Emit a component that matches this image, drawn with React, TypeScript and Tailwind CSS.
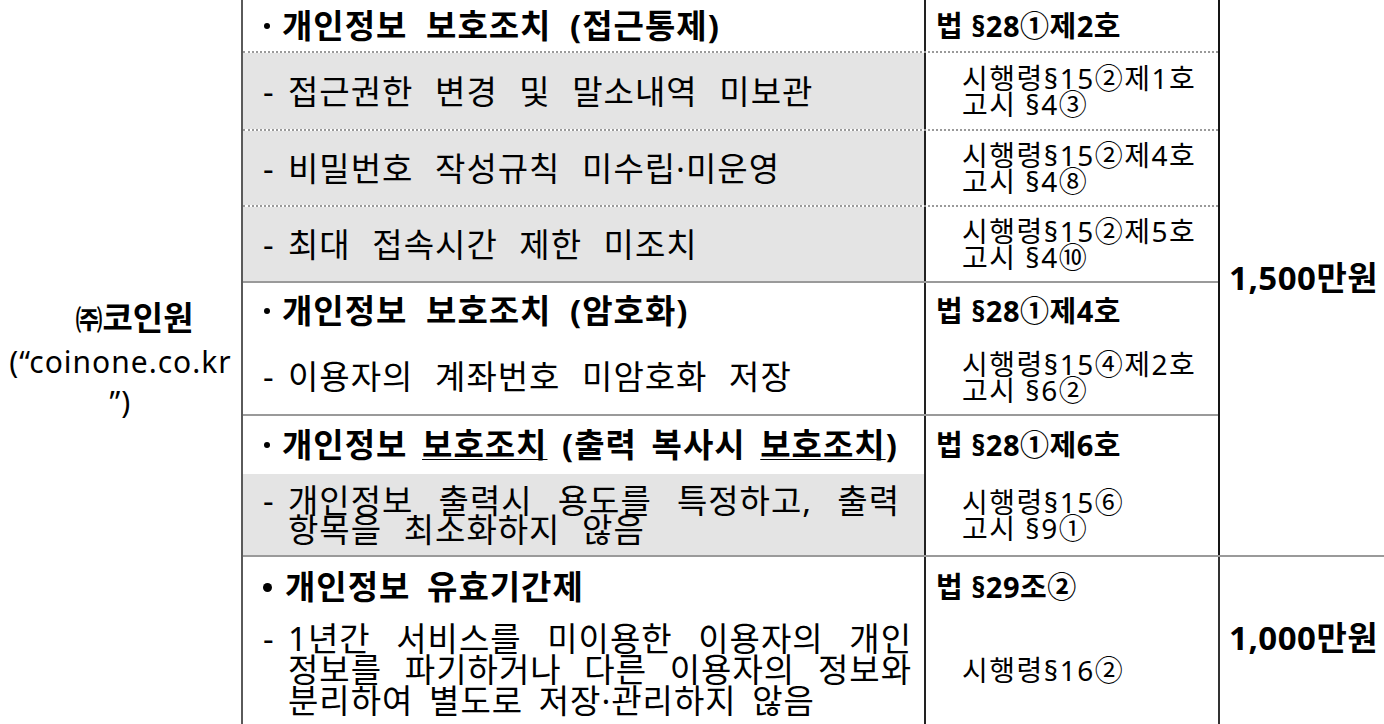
import React from 'react';

interface Row {
  h: string;
  kind: 'head' | 'item';
  text: string[];
  law: string[];
  gray?: boolean;
  line?: 'dot' | 'solid';
}

// Noto Sans first so that §, digits and · stay narrow; hangul falls through to the CJK face
const font = "font-['Noto_Sans','Noto_Sans_CJK_KR',sans-serif]";

// upper group (1,500만원)
const upper: Row[] = [
  { h: 'h-[53px]', kind: 'head', text: ['개인정보 보호조치 (접근통제)'], law: ['법 §28①제2호'], line: 'dot' },
  { h: 'h-[78px]', kind: 'item', text: ['접근권한 변경 및 말소내역 미보관'], law: ['시행령§15②제1호', '고시 §4③'], gray: true, line: 'dot' },
  { h: 'h-[76px]', kind: 'item', text: ['비밀번호 작성규칙 미수립·미운영'], law: ['시행령§15②제4호', '고시 §4⑧'], gray: true, line: 'dot' },
  { h: 'h-[76px]', kind: 'item', text: ['최대 접속시간 제한 미조치'], law: ['시행령§15②제5호', '고시 §4⑩'], gray: true, line: 'solid' },
  { h: 'h-[56px]', kind: 'head', text: ['개인정보 보호조치 (암호화)'], law: ['법 §28①제4호'] },
  { h: 'h-[77px]', kind: 'item', text: ['이용자의 계좌번호 미암호화 저장'], law: ['시행령§15④제2호', '고시 §6②'], line: 'solid' },
  { h: 'h-[58px]', kind: 'head', text: ['출력'], law: ['법 §28①제6호'] },
  { h: 'h-[81px]', kind: 'item', text: ['개인정보 출력시 용도를 특정하고, 출력', '항목을 최소화하지 않음'], law: ['시행령§15⑥', '고시 §9①'], gray: true },
];

const Bullet: React.FC<{ big?: boolean }> = ({ big }) => (
  <span
    className={
      big
        ? 'inline-block w-[9px] h-[9px] rounded-full bg-black mr-[13px] ml-[2px] shrink-0'
        : 'inline-block w-[6px] h-[6px] rounded-full bg-black mr-[12px] ml-[4px] shrink-0'
    }
  />
);

const HeadText: React.FC<{ text: string }> = ({ text }) => {
  // the print row has underlined 보호조치 twice
  if (text === '출력') {
    return (
      <span className="[word-spacing:5px]">
        개인정보 <span className="underline underline-offset-[2px] decoration-1">보호조치</span> (출력 복사시{' '}
        <span className="underline underline-offset-[2px] decoration-1">보호조치</span>)
      </span>
    );
  }
  return <span>{text}</span>;
};

const ItemCell: React.FC<{ row: Row }> = ({ row }) => {
  if (row.kind === 'head') {
    return (
      <div className="flex items-center pl-[17px] text-[33px] font-bold tracking-[1px] [word-spacing:9px] whitespace-nowrap">
        <Bullet />
        <HeadText text={row.text[0]} />
      </div>
    );
  }
  return (
    <div className="flex w-full pl-[20px] pr-[24px] text-[33px] leading-[29px] tracking-[1px] [word-spacing:12px]">
      <span className="w-[25px] shrink-0">-</span>
      <div className="flex-1">
        {row.text.map((t, i) => (
          <div
            key={i}
            className={i < row.text.length - 1 ? 'text-justify [text-align-last:justify]' : ''}
          >
            {t}
          </div>
        ))}
      </div>
    </div>
  );
};

const LawCell: React.FC<{ lines: string[]; bold?: boolean }> = ({ lines, bold }) =>
  bold ? (
    <div className="pl-[10px] text-[29px] font-bold tracking-[0.5px] whitespace-nowrap">{lines[0]}</div>
  ) : (
    <div className="pl-[36px] text-[28px] leading-[26px] tracking-[1.5px] whitespace-nowrap">
      {lines.map((l, i) => (
        <div key={i}>{l}</div>
      ))}
    </div>
  );

const TableRow: React.FC<{ row: Row }> = ({ row }) => {
  const line =
    row.line === 'dot'
      ? 'border-b-2 border-dotted border-[#9a9a9a]'
      : row.line === 'solid'
        ? 'border-b-2 border-[#9a9a9a]'
        : '';
  return (
    <div className={`grid grid-cols-[681px_294px] ${row.h} ${line}`}>
      <div className={`flex items-center ${row.gray ? 'bg-[#e4e4e4]' : ''}`}>
        <ItemCell row={row} />
      </div>
      <div className="flex items-center border-l-2 border-[#222]">
        <LawCell lines={row.law} bold={row.kind === 'head'} />
      </div>
    </div>
  );
};

const App: React.FC = () => {
  return (
    <div className={`flex w-[1384px] h-[724px] bg-white text-black overflow-hidden ${font}`}>
      {/* company */}
      <div className="w-[241px] shrink-0 flex flex-col items-center justify-center pb-[6px]">
        <div className="text-[33px] font-bold leading-[44px] pl-[28px]">
          <span className="text-[27px]">㈜</span>코인원
        </div>
        <div className="text-[30px] leading-[40px] tracking-[1px] text-center">
          (“coinone.co.kr
          <br />
          ”)
        </div>
      </div>

      <div className="flex-1 flex flex-col border-l-2 border-[#5a5a5a]">
        {/* upper group */}
        <div className="flex h-[555px]">
          <div className="w-[975px] flex flex-col">
            {upper.map((row, i) => (
              <TableRow key={i} row={row} />
            ))}
          </div>
          <div className="flex-1 flex items-center border-l-2 border-[#151515] pl-[9px] text-[33px] font-bold tracking-[0.5px]">
            1,500만원
          </div>
        </div>

        {/* lower group */}
        <div className="flex flex-1 border-t-2 border-[#9a9a9a]">
          <div className="w-[975px] grid grid-cols-[681px_294px] grid-rows-[60px_1fr]">
            <div className="flex items-center pl-[18px] text-[33px] font-bold tracking-[1px] [word-spacing:7px]">
              <Bullet big />
              개인정보 유효기간제
            </div>
            <div className="flex items-center border-l-2 border-[#222]">
              <LawCell lines={['법 §29조②']} bold />
            </div>
            <div className="flex items-center pb-[2px]">
              <div className="flex w-full pl-[20px] pr-[12px] text-[33px] leading-[31px] tracking-[1px] [word-spacing:6px]">
                <span className="w-[25px] shrink-0">-</span>
                <div className="flex-1">
                  <div className="text-justify [text-align-last:justify]">1년간 서비스를 미이용한 이용자의 개인</div>
                  <div className="text-justify [text-align-last:justify]">정보를 파기하거나 다른 이용자의 정보와</div>
                  <div>분리하여 별도로 저장·관리하지 않음</div>
                </div>
              </div>
            </div>
            <div className="flex items-center border-l-2 border-[#222] pb-[2px]">
              <LawCell lines={['시행령§16②']} />
            </div>
          </div>
          <div className="flex-1 flex items-center border-l-2 border-[#333] pl-[9px] text-[33px] font-bold tracking-[0.5px] pb-[6px]">
            1,000만원
          </div>
        </div>
      </div>
    </div>
  );
};

export default App;
